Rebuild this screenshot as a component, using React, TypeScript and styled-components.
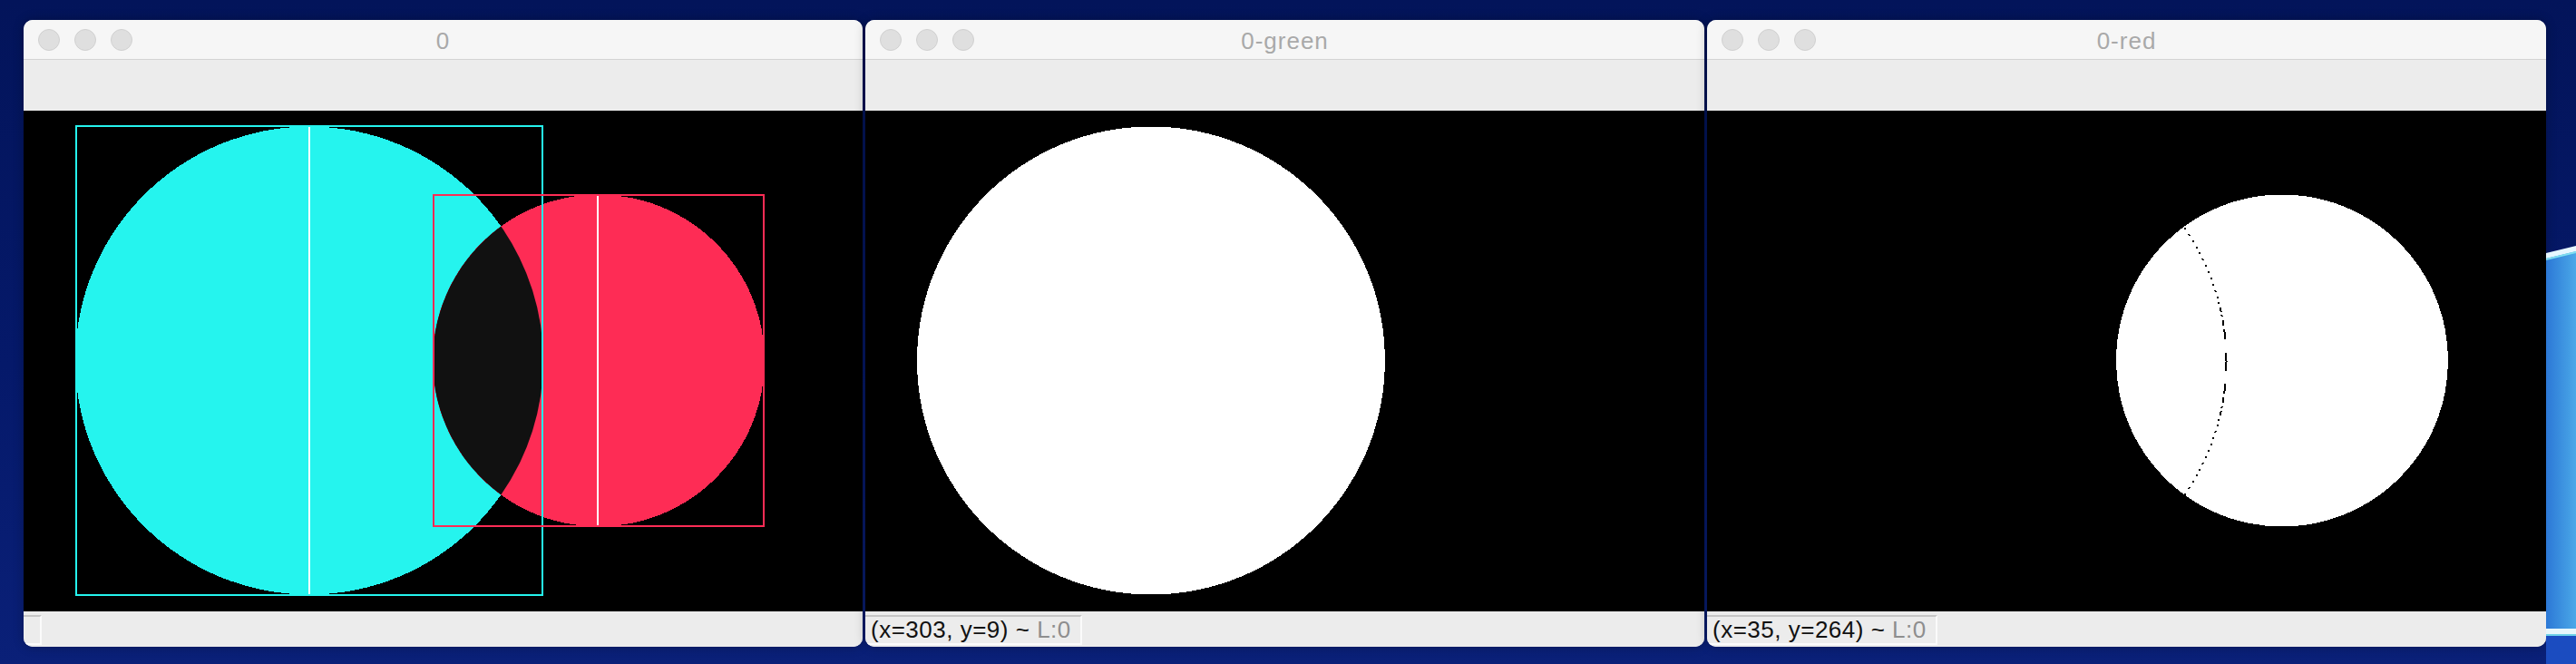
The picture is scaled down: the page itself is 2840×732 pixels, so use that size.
import React from "react";
import styled, { createGlobalStyle } from "styled-components";

const GlobalStyle = createGlobalStyle`
    html, body {
        margin: 0;
        padding: 0;
        background: #04165e;
    }
`

const Desktop = styled.div`
    display: flex;
    width: 2840px;
    height: 732px;
    overflow: hidden;
    background: linear-gradient(180deg, #03145a 0%, #05196a 55%, #0a2078 100%);
`

const Windows = styled.div`
    display: flex;
    align-items: flex-start;
    gap: 3px;
    padding: 22px 0 0 26px;
`

const Window = styled.section`
    width: 925px;
    display: flex;
    flex-direction: column;
    border-radius: 10px;
    overflow: hidden;
    background: #ececec;
    box-shadow: 0 0 12px rgba(0, 0, 0, 0.28);
`

const TitleBar = styled.header`
    display: grid;
    grid-template-columns: 1fr auto 1fr;
    align-items: center;
    height: 43px;
    background: #f6f6f6;
    border-bottom: 1px solid #d3d3d3;
`

const Lights = styled.div`
    display: flex;
    gap: 16px;
    padding-left: 16px;
`

const Light = styled.span`
    width: 24px;
    height: 24px;
    box-sizing: border-box;
    border-radius: 50%;
    background: #dfdfdf;
    border: 1px solid #d0d0d0;
`

const Title = styled.div`
    padding-top: 2px;
    font-family: "Liberation Sans", Arial, sans-serif;
    font-size: 26px;
    letter-spacing: 1px;
    line-height: 1;
    color: #a9a9a9;
`

const Toolbar = styled.div`
    height: 56px;
    background: #ececec;
`

const Canvas = styled.svg`
    display: block;
    width: 925px;
    height: 552px;
    background: #000;
`

const StatusBar = styled.footer`
    display: flex;
    align-items: flex-start;
    height: 39px;
    box-sizing: border-box;
    padding-top: 4px;
    background: #ececec;
`

const StatusBox = styled.div`
    display: flex;
    align-items: center;
    height: 33px;
    min-width: 20px;
    box-sizing: border-box;
    padding: 0 10px 0 6px;
    border-top: 2px solid #c6c6c6;
    border-right: 2px solid #fbfbfb;
    border-bottom: 2px solid #fbfbfb;
    font-family: "Liberation Sans", Arial, sans-serif;
    font-size: 26px;
    letter-spacing: 0.5px;
    line-height: 29px;
    white-space: pre;
    color: #111;
`

const Muted = styled.span`
    color: #8e8e8e;
`

const Wallpaper = styled.svg`
    display: block;
    flex: 0 0 33px;
    width: 33px;
    height: 732px;
`

// geometry of the drawn image, in canvas pixels
const BIG = { cx: 315, cy: 275.5, r: 258 };
const SMALL = { cx: 634, cy: 275.5, r: 183 };

const lensX = BIG.cx + (BIG.r ** 2 - SMALL.r ** 2 + (SMALL.cx - BIG.cx) ** 2) / (2 * (SMALL.cx - BIG.cx));
const lensH = Math.sqrt(BIG.r ** 2 - (lensX - BIG.cx) ** 2);

// leftover seam pixels along the big circle's edge in the red mask
const SEAM: [number, number][] = [
    [25, 35], [40, 45], [50, 51], [55, 59], [64, 65], [70, 71], [77, 78], [84, 85],
    [91, 92], [98, 99], [105, 106], [112, 113], [119, 120], [125, 126], [132, 133], [139, 140], [146, 147],
];

const seamPixels = () => {
    const out: { x: number; y: number }[] = [];
    const add = (dy: number) => {
        const x = BIG.cx + Math.sqrt(BIG.r * BIG.r - dy * dy);
        out.push({ x: Math.floor(x) - 1, y: Math.round(BIG.cy + dy) });
    };
    for (let dy = -9; dy <= 10; dy++) add(dy);
    SEAM.forEach(([a, b]) => {
        for (let d = a; d <= b; d++) {
            add(-d);
            add(d);
        }
    });
    return out;
};

const Overlay = () => (
    <Canvas viewBox="0 0 925 552">
        <circle cx={BIG.cx} cy={BIG.cy} r={BIG.r} fill="#25f4ee" shapeRendering="crispEdges" />
        <circle cx={SMALL.cx} cy={SMALL.cy} r={SMALL.r} fill="#fe2c55" shapeRendering="crispEdges" />
        <path
            d={`M ${lensX} ${BIG.cy - lensH} A ${BIG.r} ${BIG.r} 0 0 1 ${lensX} ${BIG.cy + lensH} A ${SMALL.r} ${SMALL.r} 0 0 1 ${lensX} ${BIG.cy - lensH} Z`}
            fill="#111111"
        />
        <g shapeRendering="crispEdges">
            <line x1={BIG.cx} y1={16} x2={BIG.cx} y2={535} stroke="#fff" strokeWidth={2} />
            <line x1={633} y1={92} x2={633} y2={459} stroke="#fff" strokeWidth={2} />
            <rect x={58} y={17} width={514} height={517} fill="none" stroke="#25f4ee" strokeWidth={2} />
            <rect x={452} y={93} width={364} height={365} fill="none" stroke="#fe2c55" strokeWidth={2} />
        </g>
    </Canvas>
);

const GreenMask = () => (
    <Canvas viewBox="0 0 925 552">
        <circle cx={BIG.cx} cy={BIG.cy} r={BIG.r} fill="#fff" shapeRendering="crispEdges" />
    </Canvas>
);

const RedMask = () => (
    <Canvas viewBox="0 0 925 552">
        <circle cx={SMALL.cx} cy={SMALL.cy} r={SMALL.r} fill="#fff" shapeRendering="crispEdges" />
        <g shapeRendering="crispEdges">
            {seamPixels().map((p, i) => (
                <rect key={i} x={p.x} y={p.y} width={2} height={1} fill="#000" />
            ))}
        </g>
    </Canvas>
);

type WinProps = {
    title: string;
    status?: string;
    children: React.ReactNode;
};

const ImageWindow = ({ title, status, children }: WinProps) => (
    <Window>
        <TitleBar>
            <Lights>
                <Light />
                <Light />
                <Light />
            </Lights>
            <Title>{title}</Title>
            <span />
        </TitleBar>
        <Toolbar />
        {children}
        <StatusBar>
            <StatusBox>
                {status && (
                    <>
                        {status} <Muted>L:0</Muted>
                    </>
                )}
            </StatusBox>
        </StatusBar>
    </Window>
);

const App = () => {
    return (
        <>
            <GlobalStyle />
            <Desktop>
                <Windows>
                    <ImageWindow title="0">
                        <Overlay />
                    </ImageWindow>
                    <ImageWindow title="0-green" status="(x=303, y=9) ~">
                        <GreenMask />
                    </ImageWindow>
                    <ImageWindow title="0-red" status="(x=35, y=264) ~">
                        <RedMask />
                    </ImageWindow>
                </Windows>
                <Wallpaper viewBox="0 0 33 732">
                    <defs>
                        <linearGradient id="sky" x1="0" y1="0" x2="1" y2="0">
                            <stop offset="0" stopColor="#2c78d6" />
                            <stop offset="1" stopColor="#4aa8e8" />
                        </linearGradient>
                    </defs>
                    <polygon points="0,281 33,273 33,732 0,732" fill="url(#sky)" />
                    <polygon points="0,279 33,271 33,277 0,285" fill="#e6f7ff" />
                    <polygon points="0,285 33,277 33,279 0,287" fill="#7fe0f0" />
                    <rect x="0" y="693" width="33" height="6" fill="#e6f6fb" />
                    <rect x="0" y="699" width="33" height="2" fill="#6fd2e8" />
                    <rect x="0" y="701" width="33" height="31" fill="#1b4cc0" />
                </Wallpaper>
            </Desktop>
        </>
    );
};

export default App;
